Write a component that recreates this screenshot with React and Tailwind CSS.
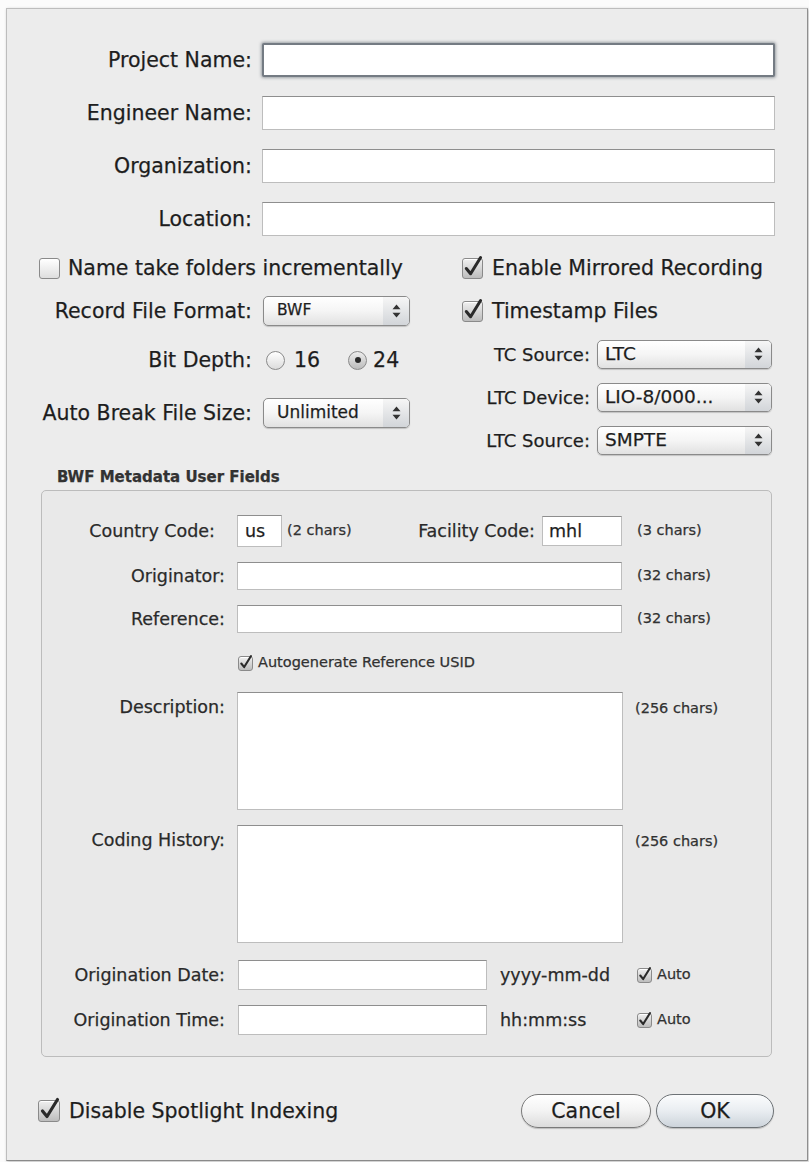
import React from 'react'

function Check({ checked, box = 'w-[21px] h-[21px]', className = '' }) {
  return (
    <span
      className={`relative inline-block shrink-0 rounded-[3px] border border-[#8a8a8a] shadow-[inset_0_1px_0_#fff] ${
        checked ? 'bg-linear-to-b from-[#f0f0f0] to-[#bdbdbd]' : 'bg-linear-to-b from-white to-[#dedede]'
      } ${box} ${className}`}
    >
      {checked && (
        <svg viewBox="0 0 20 20" className="absolute inset-0 h-full w-full overflow-visible">
          <path d="M3.5 10 L8 15.5 L18.5 -1.5" fill="none" stroke="#2a2a2a" strokeWidth="3.2" strokeLinecap="round" strokeLinejoin="round" />
        </svg>
      )}
    </span>
  )
}

function Radio({ on }) {
  return (
    <span
      className={`inline-flex h-[19px] w-[19px] shrink-0 items-center justify-center rounded-full border border-[#8a8a8a] ${
        on ? 'bg-linear-to-b from-[#ededed] to-[#bcbcbc]' : 'bg-linear-to-b from-white to-[#dcdcdc]'
      }`}
    >
      {on && <span className="h-[6px] w-[6px] rounded-full bg-[#2a2a2a]" />}
    </span>
  )
}

function Popup({ value, className = '', text = '' }) {
  return (
    <div
      className={`flex items-center overflow-hidden rounded-[5px] border border-[#8a8a8a] bg-linear-to-b from-white via-[#f5f5f5] to-[#e1e1e1] shadow-[0_1px_1px_rgba(0,0,0,0.18)] ${className}`}
    >
      <span className={`flex-1 whitespace-nowrap ${text}`}>{value}</span>
      <span className="flex h-full w-[26px] items-center justify-center bg-linear-to-b from-[#f6f6f6] to-[#d2d5d9]">
        <svg width="9" height="14" viewBox="0 0 9 14">
          <path d="M4.5 0.5 L8.5 5.2 H0.5 Z M4.5 13.5 L8.5 8.8 H0.5 Z" fill="#333" />
        </svg>
      </span>
    </div>
  )
}

function Field({ className = '', children }) {
  return (
    <div className={`flex items-center bg-white border border-[#bdbdbd] border-t-[#8e8e8e] ${className}`}>
      {children}
    </div>
  )
}

function TopRow({ label, focused }) {
  return (
    <div className="flex items-center">
      <span className="w-[245px] text-right text-[20.5px]">{label}</span>
      {focused ? (
        <div className="ml-[10px] h-[34px] w-[513px] rounded-[2px] border-2 border-[#747b83] bg-white shadow-[0_0_3px_1px_rgba(90,98,108,0.55)]" />
      ) : (
        <Field className="ml-[10px] h-[34px] w-[513px]" />
      )}
    </div>
  )
}

function BoxLabel({ children, className = '' }) {
  return <span className={`w-[183px] shrink-0 text-right text-[17.5px] text-[#2a2a2a] ${className}`}>{children}</span>
}

export default function App() {
  return (
    <div className="min-h-screen bg-[#fbfbfb] pl-[6px] pt-[8px] font-['DejaVu_Sans','Liberation_Sans',sans-serif] text-[#1c1c1c] [-webkit-text-stroke:0.25px_#2a2a2a]">
      <div className="flex h-[1153px] w-[802px] flex-col border border-[#bdbdbd] border-b-[#8a8a8a] border-r-[#8f8f8f] bg-[#ececec] shadow-[1px_1px_3px_rgba(0,0,0,0.25)]">

        {/* TOP FIELDS */}
        <div className="mt-[34px] flex flex-col gap-[19px]">
          <TopRow label="Project Name:" focused />
          <TopRow label="Engineer Name:" />
          <TopRow label="Organization:" />
          <TopRow label="Location:" />
        </div>

        {/* OPTIONS */}
        <div className="mt-[14px] flex">
          <div className="flex w-[440px] flex-col">
            <div className="flex h-[36px] items-center pl-[32px]">
              <Check />
              <span className="ml-[8px] text-[20.5px]">Name take folders incrementally</span>
            </div>
            <div className="mt-[7px] flex h-[36px] items-center">
              <span className="w-[245px] text-right text-[20.5px]">Record File Format:</span>
              <Popup value="BWF" className="ml-[11px] h-[30px] w-[147px]" text="pl-[13px] text-[15.5px]" />
            </div>
            <div className="mt-[13px] flex h-[36px] items-center">
              <span className="w-[245px] text-right text-[20.5px]">Bit Depth:</span>
              <span className="ml-[14px] flex"><Radio /></span>
              <span className="ml-[9px] text-[20.5px]">16</span>
              <span className="ml-[28px] flex"><Radio on /></span>
              <span className="ml-[6px] text-[20.5px]">24</span>
            </div>
            <div className="mt-[17px] flex h-[36px] items-center">
              <span className="w-[245px] text-right text-[20.5px]">Auto Break File Size:</span>
              <Popup value="Unlimited" className="ml-[11px] h-[30px] w-[147px]" text="pl-[13px] text-[17px]" />
            </div>
          </div>

          <div className="flex flex-1 flex-col gap-[7px]">
            <div className="flex h-[36px] items-center pl-[15px]">
              <Check checked />
              <span className="ml-[9px] text-[20.5px]">Enable Mirrored Recording</span>
            </div>
            <div className="flex h-[36px] items-center pl-[15px]">
              <Check checked />
              <span className="ml-[9px] text-[20.5px]">Timestamp Files</span>
            </div>
            {[
              ['TC Source:', 'LTC'],
              ['LTC Device:', 'LIO-8/000...'],
              ['LTC Source:', 'SMPTE'],
            ].map(([label, value]) => (
              <div key={label} className="flex h-[36px] items-center">
                <span className="w-[143px] text-right text-[18px]">{label}</span>
                <Popup value={value} className="ml-[7px] h-[29px] w-[175px]" text="pl-[7px] text-[18.5px]" />
              </div>
            ))}
          </div>
        </div>

        {/* BWF METADATA */}
        <div className="ml-[50px] mt-[9px] text-[15px] font-bold leading-[20px] text-[#333]">BWF Metadata User Fields</div>
        <div className="ml-[34px] mt-[3px] flex w-[731px] flex-col rounded-[5px] border border-[#bcbcbc] bg-[#e9e9e9] pb-[21px] pt-[24px]">
          <div className="flex h-[32px] items-center">
            <BoxLabel className="pr-[10px]">Country Code:</BoxLabel>
            <Field className="ml-[12px] h-[32px] w-[45px] pl-[7px] text-[17.5px]">us</Field>
            <span className="ml-[5px] flex w-[248px] items-center justify-between">
              <span className="text-[14.5px] text-[#333]">(2 chars)</span>
              <span className="text-[17.5px] text-[#2a2a2a]">Facility Code:</span>
            </span>
            <Field className="ml-[7px] h-[30px] w-[80px] pl-[6px] text-[17.5px]">mhl</Field>
            <span className="ml-[15px] text-[14.5px] text-[#333]">(3 chars)</span>
          </div>

          {['Originator:', 'Reference:'].map((label) => (
            <div key={label} className="mt-[15px] flex h-[28px] items-center">
              <BoxLabel>{label}</BoxLabel>
              <Field className="ml-[12px] h-[28px] w-[385px]" />
              <span className="ml-[15px] text-[14.5px] text-[#333]">(32 chars)</span>
            </div>
          ))}

          <div className="mt-[20px] flex h-[20px] items-center pl-[196px]">
            <Check checked box="w-[15px] h-[15px]" />
            <span className="ml-[5px] text-[14.5px] text-[#333]">Autogenerate Reference USID</span>
          </div>

          {['Description:', 'Coding History:'].map((label, i) => (
            <div key={label} className={`flex items-start ${i === 0 ? 'mt-[19px]' : 'mt-[15px]'}`}>
              <BoxLabel className="mt-[4px] leading-[22px]">{label}</BoxLabel>
              <Field className="ml-[12px] h-[118px] w-[386px]" />
              <span className="ml-[12px] mt-[5px] text-[14.5px] leading-[22px] text-[#333]">(256 chars)</span>
            </div>
          ))}

          {[
            ['Origination Date:', 'yyyy-mm-dd'],
            ['Origination Time:', 'hh:mm:ss'],
          ].map(([label, fmt], i) => (
            <div key={label} className={`flex h-[30px] items-center ${i === 0 ? 'mt-[17px]' : 'mt-[15px]'}`}>
              <BoxLabel>{label}</BoxLabel>
              <Field className="ml-[13px] h-[30px] w-[249px]" />
              <span className="ml-[13px] w-[137px] text-[17.5px] text-[#2a2a2a]">{fmt}</span>
              <Check checked box="w-[15px] h-[15px]" />
              <span className="ml-[5px] text-[14.5px] text-[#333]">Auto</span>
            </div>
          ))}
        </div>

        {/* FOOTER */}
        <div className="mt-[37px] flex h-[34px] items-center pl-[31px] pr-[33px]">
          <Check checked box="w-[22px] h-[22px]" />
          <span className="ml-[9px] text-[20.5px]">Disable Spotlight Indexing</span>
          <div className="ml-auto flex h-[34px] w-[130px] items-center justify-center rounded-full border border-[#7a7a7a] bg-linear-to-b from-white via-[#f3f3f3] to-[#dcdcdc] text-[20.5px] shadow-[0_1px_1px_rgba(0,0,0,0.2)]">
            Cancel
          </div>
          <div className="ml-[5px] flex h-[34px] w-[118px] items-center justify-center rounded-full border border-[#6d7276] bg-linear-to-b from-[#fbfcfd] via-[#e9edf1] to-[#cdd4db] text-[20.5px] shadow-[0_1px_1px_rgba(0,0,0,0.2)]">
            OK
          </div>
        </div>
      </div>
    </div>
  )
}
